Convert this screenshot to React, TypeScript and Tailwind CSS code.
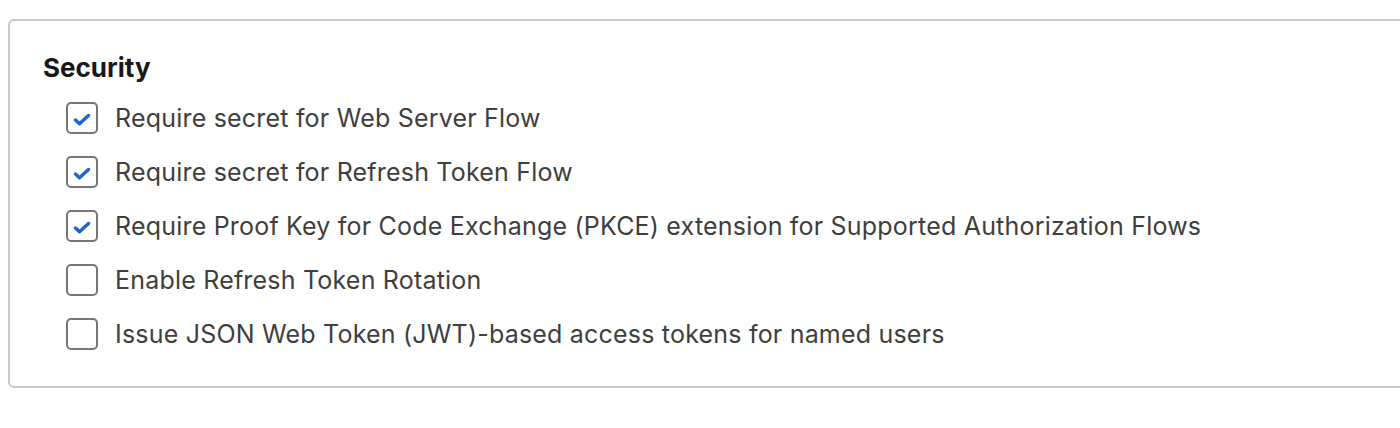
import React from 'react';

const OPTIONS = [
  { label: 'Require secret for Web Server Flow', checked: true },
  { label: 'Require secret for Refresh Token Flow', checked: true },
  { label: 'Require Proof Key for Code Exchange (PKCE) extension for Supported Authorization Flows', checked: true },
  { label: 'Enable Refresh Token Rotation', checked: false },
  { label: 'Issue JSON Web Token (JWT)-based access tokens for named users', checked: false },
];

const Checkbox: React.FC<{ checked: boolean }> = ({ checked }) => (
  <span className="w-[32px] h-[32px] shrink-0 border-2 border-[#767676] rounded-[5px] bg-white flex items-center justify-center">
    {checked && (
      <svg width="18" height="13" viewBox="0 0 18 13" className="mt-[2px] -ml-[1px]">
        <path d="M2.5 7 L6.5 10.8 L15.5 2.5" fill="none" stroke="#1b66d2" strokeWidth="3.4" strokeLinecap="round" strokeLinejoin="round" />
      </svg>
    )}
  </span>
);

export default function App() {
  return (
    <div className="w-[1400px] h-[428px] bg-white overflow-hidden font-['Inter',sans-serif]">
      <div className="ml-2 mt-[19px] w-[1440px] border-2 border-[#c9c9c9] rounded-[6px] pl-[33px] pt-[31px] pb-[25px]">
        <h3 className="text-[26px] leading-[32px] font-bold text-[#181818]">Security</h3>
        <div className="mt-[7px] pl-[23px]">
          {OPTIONS.map((o, i) => (
            <label key={i} className="h-[54px] flex items-center gap-[17px]">
              <Checkbox checked={o.checked} />
              <span className="text-[25px] leading-[32px] tracking-[0.2px] text-[#3e3e3c]">{o.label}</span>
            </label>
          ))}
        </div>
      </div>
    </div>
  );
}
